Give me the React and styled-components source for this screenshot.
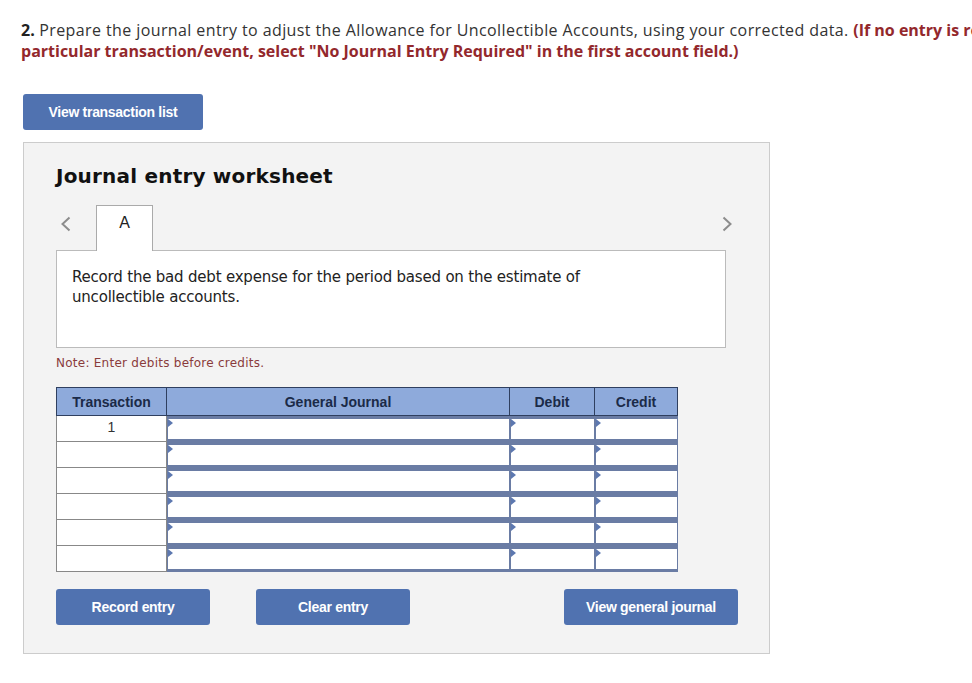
import React from 'react';
import styled, { createGlobalStyle } from 'styled-components';

const GlobalStyle = createGlobalStyle`
    html, body {
        margin: 0;
        padding: 0;
        background: #ffffff;
        overflow: hidden;
    }
    body {
        font-family: "Liberation Sans", Arial, sans-serif;
    }
`;

const Page = styled.div`
    width: 972px;
    padding: 20px 0 0 21px;
    box-sizing: border-box;
`;

const Question = styled.div`
    width: 951px;
    overflow: hidden;
    font-family: "Open Sans", "Liberation Sans", sans-serif;
    font-size: 16px;
    line-height: 21px;
    color: #333333;
    letter-spacing: 0.4px;
`;

const QLine = styled.div`
    white-space: nowrap;
`;

const Num = styled.b`
    color: #222222;
    letter-spacing: 0;
`;

const Hint = styled.b`
    color: #93282c;
    letter-spacing: 0;
`;

const BlueButton = styled.button`
    width: ${(p) => p.$w}px;
    height: 36px;
    border: none;
    border-radius: 3px;
    background: #5072b0;
    color: #ffffff;
    font-family: "Liberation Sans", Arial, sans-serif;
    font-weight: bold;
    font-size: 14px;
    letter-spacing: -0.3px;
    padding: 0;
    cursor: pointer;
`;

const TopButtonRow = styled.div`
    margin: 32px 0 0 2px;
`;

const Worksheet = styled.div`
    width: 713px;
    margin: 12px 0 0 2px;
    padding: 21px 0 28px 32px;
    background: #f3f3f3;
    border: 1px solid #cccccc;
`;

const Heading = styled.h2`
    margin: 0;
    font-family: "DejaVu Sans", Verdana, sans-serif;
    font-weight: bold;
    font-size: 20px;
    line-height: 24px;
    letter-spacing: 0.2px;
    color: #111111;
`;

const TabBar = styled.div`
    display: flex;
    align-items: flex-end;
    width: 676px;
    height: 46px;
    margin-top: 16px;
`;

const Chevron = styled.span`
    display: flex;
    align-items: center;
    height: 36px;
    width: ${(p) => p.$w}px;
    justify-content: ${(p) => p.$right ? 'flex-end' : 'flex-start'};
    padding-left: ${(p) => p.$right ? 0 : 5}px;
    box-sizing: border-box;
    margin-bottom: 8px;
`;

const Tab = styled.div`
    width: 55px;
    height: 45px;
    background: #ffffff;
    border: 1px solid #aaaaaa;
    border-bottom: none;
    margin-bottom: -1px;
    position: relative;
    z-index: 1;
    text-align: center;
    font-size: 16px;
    line-height: 34px;
    color: #222222;
`;

const Spacer = styled.div`
    flex: 1;
`;

const Description = styled.div`
    width: 653px;
    height: 80px;
    padding: 16px 0 0 15px;
    background: #ffffff;
    border: 1px solid #bbbbbb;
    font-family: "DejaVu Sans", Verdana, sans-serif;
    font-size: 15px;
    line-height: 20px;
    color: #222222;
    letter-spacing: -0.2px;
`;

const Note = styled.div`
    margin-top: 8px;
    font-family: "DejaVu Sans", Verdana, sans-serif;
    font-size: 12px;
    line-height: 14px;
    letter-spacing: 0.25px;
    color: #8a3b3b;
`;

const Table = styled.table`
    margin-top: 17px;
    border-collapse: collapse;
    table-layout: fixed;
    width: 617px;
`;

const Th = styled.th`
    width: ${(p) => p.$w}px;
    height: 27px;
    padding: 0;
    background: #8eaadb;
    border: 1px solid #2f3f5f;
    font-size: 14px;
    font-weight: bold;
    color: #1b2a48;
    text-align: center;
`;

const TxCell = styled.td`
    height: 25px;
    padding: 0;
    background: #ffffff;
    border: 1px solid #888888;
    text-align: center;
    vertical-align: top;
    font-size: 14px;
    line-height: 22px;
    color: #333333;
`;

const InputTd = styled.td`
    padding: 0;
    border: 1px solid #6a7ca4;
    background: #6a7ca4;
`;

const InputBox = styled.div`
    position: relative;
    height: 20px;
    margin: 2px 0 1px 1px;
    background: #ffffff;
    &::before {
        content: '';
        position: absolute;
        left: 0;
        top: 0;
        border-top: 4px solid transparent;
        border-bottom: 4px solid transparent;
        border-left: 5px solid #5d78b0;
    }
`;

const ActionRow = styled.div`
    display: flex;
    width: 682px;
    margin-top: 17px;
    gap: 46px;
`;

const ActionSpacer = styled.div`
    flex: 1;
`;

const ChevronIcon = ({ right }) => (
    <svg width="10" height="16" viewBox="0 0 10 16">
        <polyline
            points={right ? '1.5,1.5 8.5,8 1.5,14.5' : '8.5,1.5 1.5,8 8.5,14.5'}
            fill="none"
            stroke="#8c8c8c"
            strokeWidth="2"
        />
    </svg>
);

const rows = [1, 2, 3, 4, 5, 6];

export default function App() {
    return (
        <Page>
            <GlobalStyle />
            <Question>
                <QLine>
                    <Num>2.</Num> Prepare the journal entry to adjust the Allowance for Uncollectible Accounts, using your corrected data.{' '}
                    <Hint>(If no entry is required for a</Hint>
                </QLine>
                <QLine>
                    <Hint>particular transaction/event, select "No Journal Entry Required" in the first account field.)</Hint>
                </QLine>
            </Question>

            <TopButtonRow>
                <BlueButton $w={180}>View transaction list</BlueButton>
            </TopButtonRow>

            <Worksheet>
                <Heading>Journal entry worksheet</Heading>

                <TabBar>
                    <Chevron $w={40}><ChevronIcon /></Chevron>
                    <Tab>A</Tab>
                    <Spacer />
                    <Chevron $w={20} $right><ChevronIcon right /></Chevron>
                </TabBar>

                <Description>
                    Record the bad debt expense for the period based on the estimate of<br />
                    uncollectible accounts.
                </Description>

                <Note>Note: Enter debits before credits.</Note>

                <Table>
                    <thead>
                        <tr>
                            <Th $w={109}>Transaction</Th>
                            <Th $w={342}>General Journal</Th>
                            <Th $w={84}>Debit</Th>
                            <Th $w={82}>Credit</Th>
                        </tr>
                    </thead>
                    <tbody>
                        {rows.map((r) => (
                            <tr key={r}>
                                <TxCell>{r === 1 ? '1' : ''}</TxCell>
                                <InputTd><InputBox /></InputTd>
                                <InputTd><InputBox /></InputTd>
                                <InputTd><InputBox /></InputTd>
                            </tr>
                        ))}
                    </tbody>
                </Table>

                <ActionRow>
                    <BlueButton $w={154}>Record entry</BlueButton>
                    <BlueButton $w={154}>Clear entry</BlueButton>
                    <ActionSpacer />
                    <BlueButton $w={174}>View general journal</BlueButton>
                </ActionRow>
            </Worksheet>
        </Page>
    );
}
